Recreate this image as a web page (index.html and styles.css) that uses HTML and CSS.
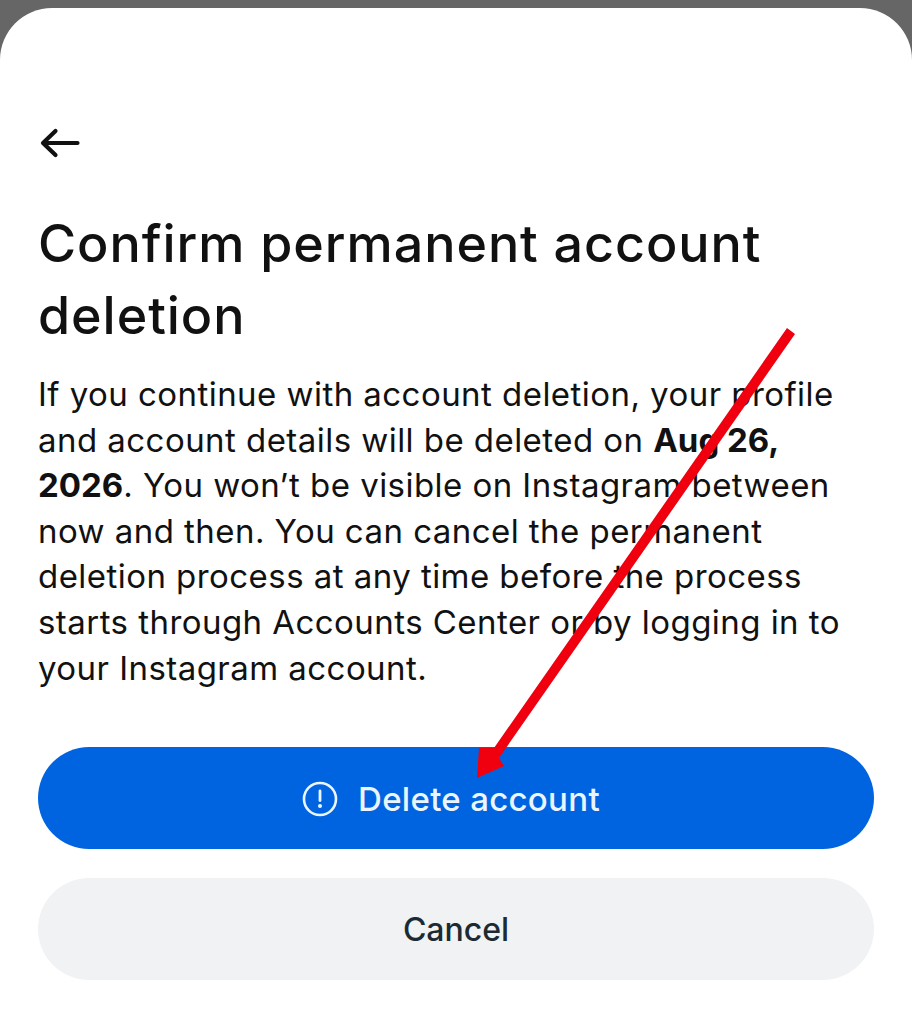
FILE: index.html
```html
<!DOCTYPE html>
<html lang="en">
<head>
  <meta charset="UTF-8" />
  <title>Confirm permanent account deletion</title>
  <link rel="stylesheet" href="styles.css">
</head>
<body>
  <div class="sheet">
    <button class="back" aria-label="Back">
      <svg width="42" height="32" viewBox="0 0 42 32"><path d="M39.500 16H6M17.500 4 5 16l12.500 12" fill="none" stroke="#111" stroke-width="4.200" stroke-linecap="round" stroke-linejoin="round"/></svg>
    </button>
    <h1>Confirm permanent account deletion</h1>
    <p>If you continue with account deletion, your profile and account details will be deleted on <b>Aug 26, 2026</b>. You won’t be visible on Instagram between now and then. You can cancel the permanent deletion process at any time before the process starts through Accounts Center or by logging in to your Instagram account.</p>
    <button class="btn primary">
      <svg width="36" height="36" viewBox="0 0 36 36"><circle cx="18" cy="18" r="16" fill="none" stroke="#eaf6ff" stroke-width="2.600"/><path d="M18 10v9.500" stroke="#eaf6ff" stroke-width="2.800" stroke-linecap="round"/><circle cx="18" cy="25" r="2" fill="#eaf6ff"/></svg>
      Delete account
    </button>
    <button class="btn secondary">Cancel</button>
  </div>
  <svg class="arrow" width="912" height="1024" viewBox="0 0 912 1024"><path d="M795 334 787 328 494 748 479 748 477 778 504 766 499 758Z" fill="#f0000f"/></svg>
</body>
</html>
```
FILE: styles.css
```css
body {
  margin: 0;
  height: 1024px;
  overflow: hidden;
  background: #666;
  font-family: Inter, "Noto Sans", sans-serif;
  color: #111;
}
.sheet {
  margin-top: 8px;
  height: 1016px;
  box-sizing: border-box;
  padding: 116px 38px 0;
  background: #fff;
  border-radius: 52px 52px 0 0;
}
button {
  font-family: inherit;
  border: none;
  cursor: pointer;
}
.back {
  display: block;
  padding: 0;
  height: 40px;
  background: none;
}
h1 {
  margin: 44px 0 0;
  font-size: 52px;
  line-height: 71.500px;
  font-weight: 500;
  letter-spacing: 0.950px;
}
p {
  margin: 21px 0 0;
  font-size: 33px;
  line-height: 45.600px;
  letter-spacing: 0.450px;
}
p b {
  letter-spacing: 0;
}
.btn {
  display: flex;
  align-items: center;
  justify-content: center;
  gap: 20px;
  width: 836px;
  height: 102px;
  padding-top: 2px;
  border-radius: 51px;
  font-size: 32px;
  font-weight: 500;
}
.primary {
  margin-top: 56px;
  padding-right: 16px;
  background: #0064e0;
  color: #eaf6ff;
  font-size: 33px;
  letter-spacing: 0.300px;
}
.secondary {
  margin-top: 29px;
  background: #f1f2f4;
  color: #1c2b33;
}
.arrow {
  position: absolute;
  top: 0;
  left: 0;
}
```
